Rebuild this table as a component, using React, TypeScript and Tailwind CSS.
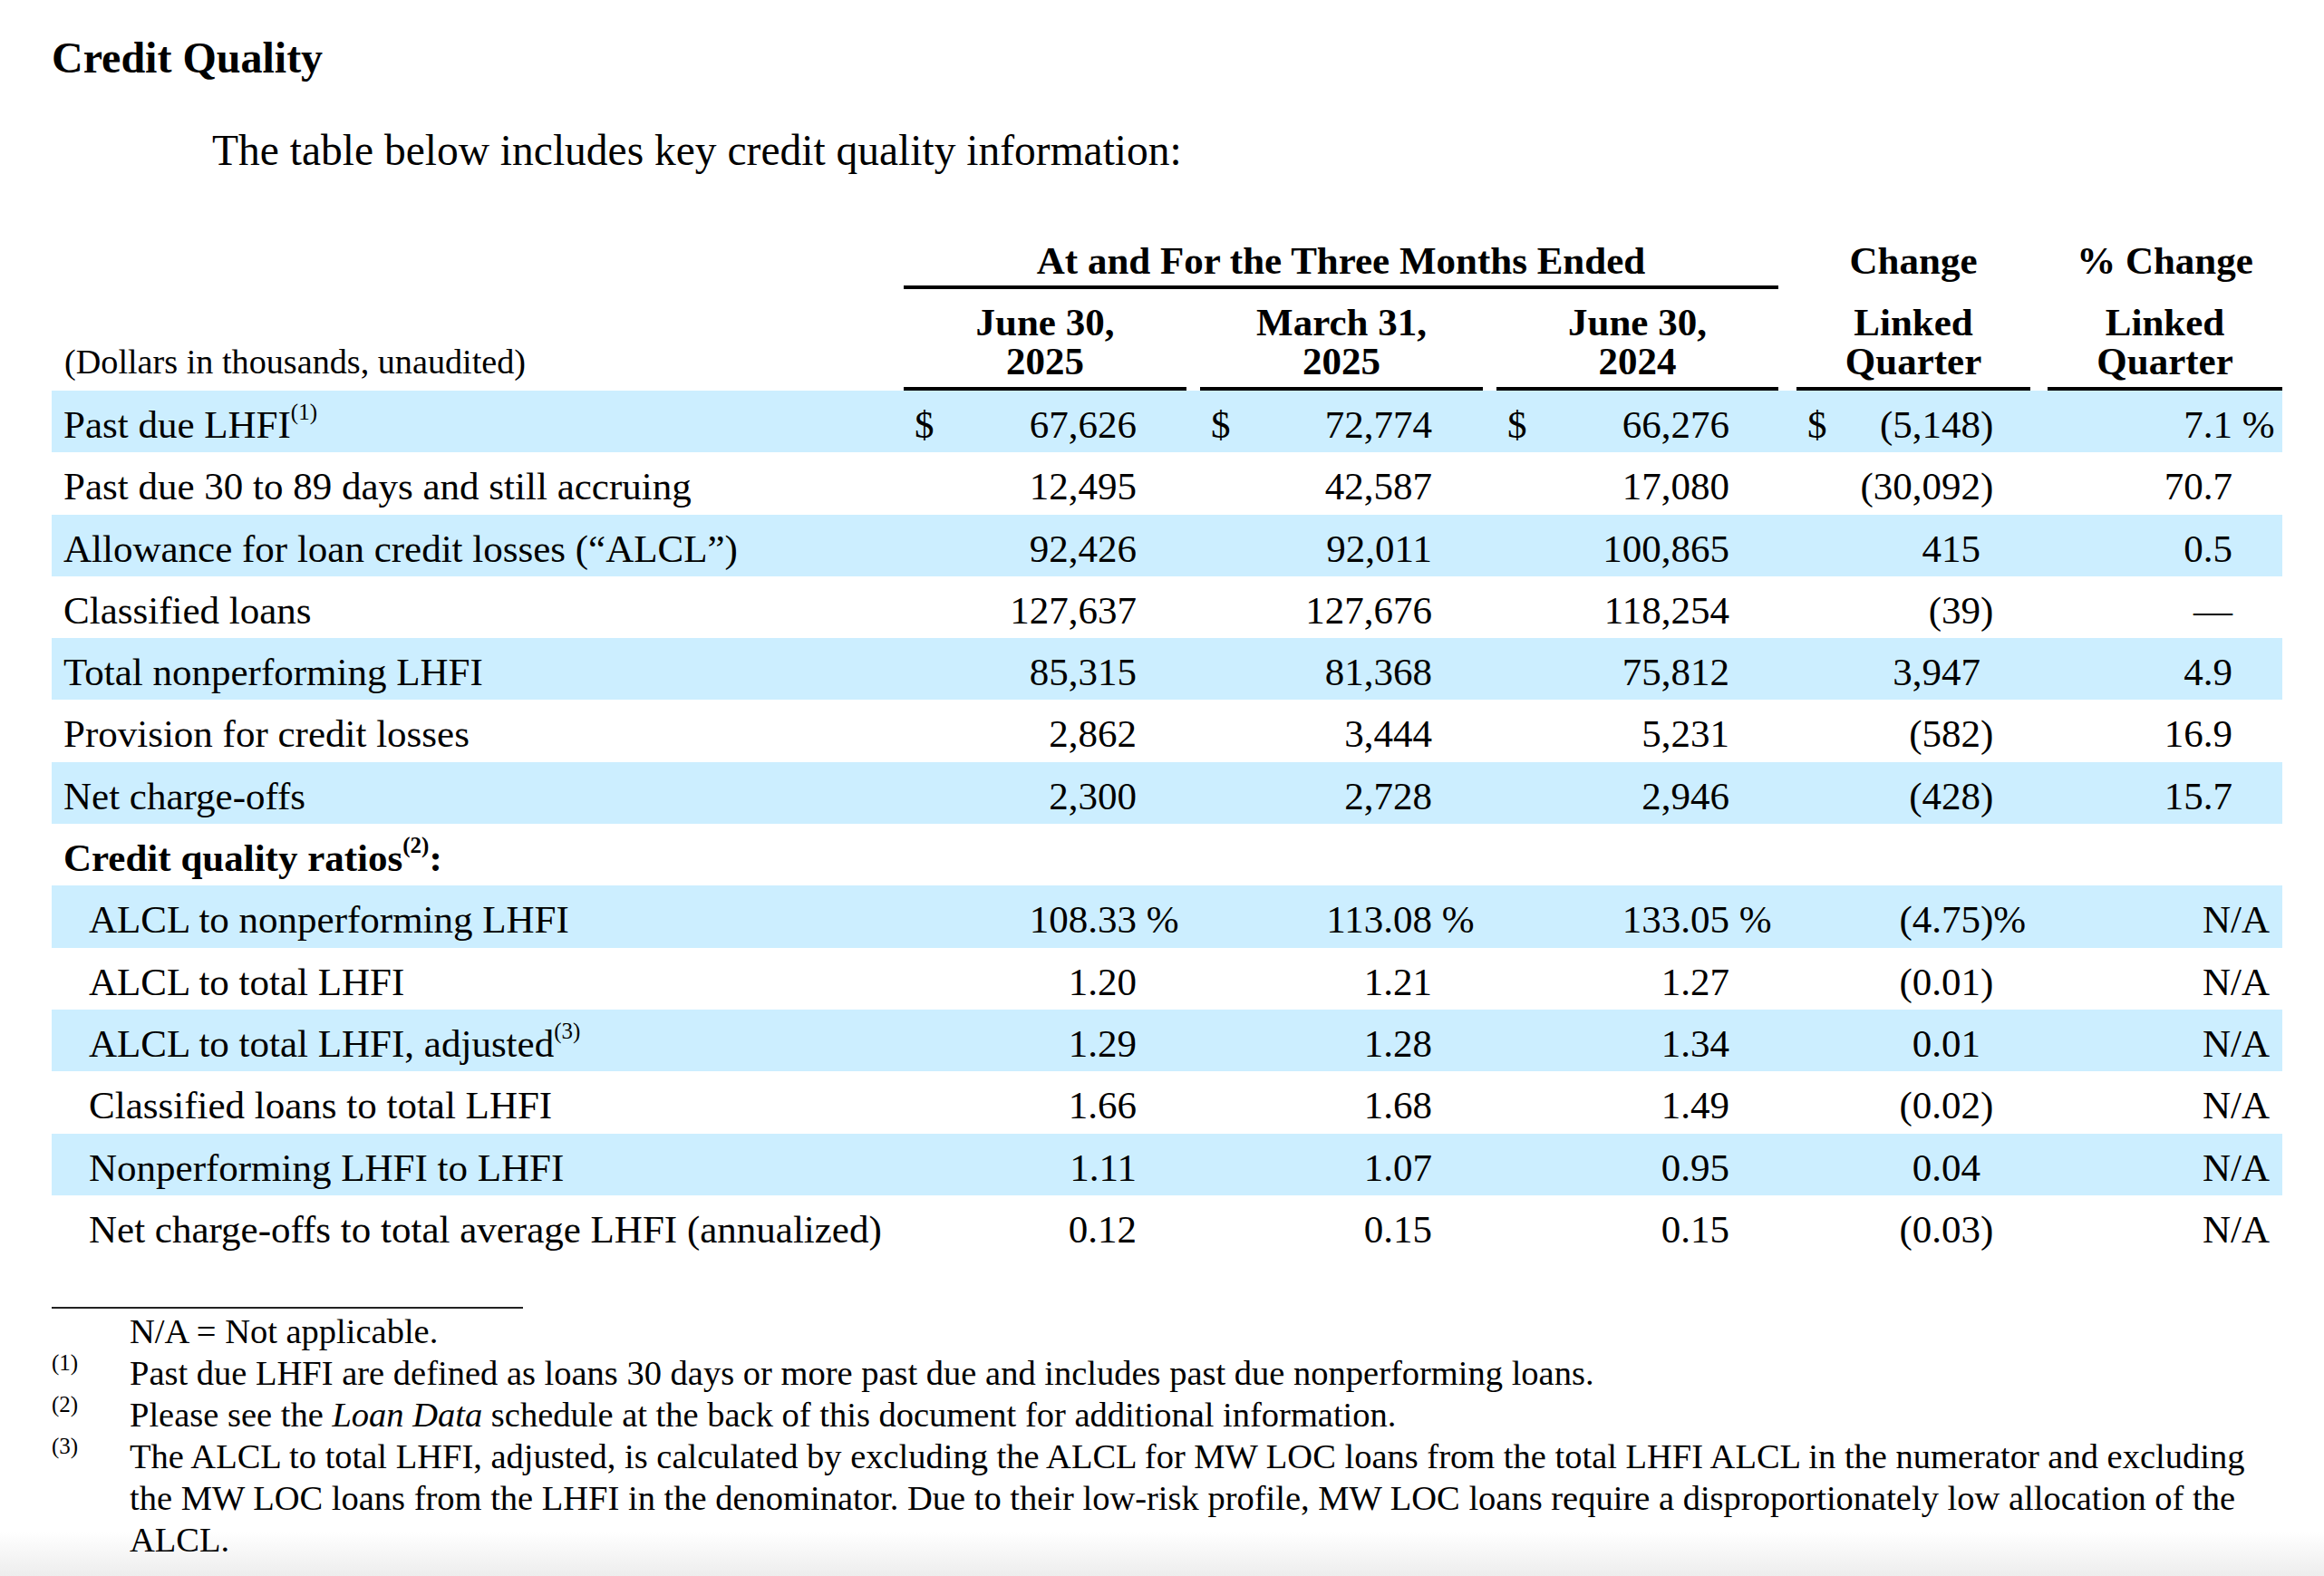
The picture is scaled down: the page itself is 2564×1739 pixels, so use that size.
import React from "react";

type Row = {
  label: React.ReactNode;
  vals?: string[];
  dollar?: boolean;
  blue?: boolean;
  indent?: boolean;
  bold?: boolean;
};

const Sup = ({ children }: { children: React.ReactNode }) => (
  <sup className="text-[25px] top-[-20px]">{children}</sup>
);

const rows: Row[] = [
  { label: <>Past due LHFI<Sup>(1)</Sup></>, vals: ["67,626", "72,774", "66,276", "(5,148)", "7.1 %"], dollar: true, blue: true },
  { label: "Past due 30 to 89 days and still accruing", vals: ["12,495", "42,587", "17,080", "(30,092)", "70.7"] },
  { label: "Allowance for loan credit losses (\u201CALCL\u201D)", vals: ["92,426", "92,011", "100,865", "415", "0.5"], blue: true },
  { label: "Classified loans", vals: ["127,637", "127,676", "118,254", "(39)", "\u2014"] },
  { label: "Total nonperforming LHFI", vals: ["85,315", "81,368", "75,812", "3,947", "4.9"], blue: true },
  { label: "Provision for credit losses", vals: ["2,862", "3,444", "5,231", "(582)", "16.9"] },
  { label: "Net charge-offs", vals: ["2,300", "2,728", "2,946", "(428)", "15.7"], blue: true },
  { label: <>Credit quality ratios<Sup>(2)</Sup>:</>, bold: true },
  { label: "ALCL to nonperforming LHFI", vals: ["108.33 %", "113.08 %", "133.05 %", "(4.75)%", "N/A"], blue: true, indent: true },
  { label: "ALCL to total LHFI", vals: ["1.20", "1.21", "1.27", "(0.01)", "N/A"], indent: true },
  { label: <>ALCL to total LHFI, adjusted<Sup>(3)</Sup></>, vals: ["1.29", "1.28", "1.34", "0.01", "N/A"], blue: true, indent: true },
  { label: "Classified loans to total LHFI", vals: ["1.66", "1.68", "1.49", "(0.02)", "N/A"], indent: true },
  { label: "Nonperforming LHFI to LHFI", vals: ["1.11", "1.07", "0.95", "0.04", "N/A"], blue: true, indent: true },
  { label: "Net charge-offs to total average LHFI (annualized)", vals: ["0.12", "0.15", "0.15", "(0.03)", "N/A"], indent: true },
];

function split(v: string): [string, string] {
  if (v.endsWith(" %")) return [v.slice(0, -2), " %"];
  if (v.endsWith(")%")) return [v.slice(0, -2), ")%"];
  if (v.endsWith(")")) return [v.slice(0, -1), ")"];
  return [v, ""];
}

const widths = ["w-[312px]", "w-[312px]", "w-[311px]", "w-[258px]", "w-[259px]"];
const gaps = ["", "ml-[15px]", "ml-[15px]", "ml-[20px]", "ml-[19px]"];
const pads = ["pr-[55px]", "pr-[56px]", "pr-[54px]", "pr-[55px]", "pr-[55px]"];

function Cell({ v, i, dollar }: { v: string; i: number; dollar?: boolean }) {
  if (v === "N/A") {
    return (
      <div className={`${widths[i]} ${gaps[i]} shrink-0 text-right pr-[14px]`}>N/A</div>
    );
  }
  const [main, suffix] = split(v);
  return (
    <div className={`${widths[i]} ${gaps[i]} ${pads[i]} shrink-0 flex pl-[12px]`}>
      <span>{dollar && i < 4 ? "$" : ""}</span>
      <span className="flex-1 text-right whitespace-nowrap">
        {main}
        <span className="inline-block w-0 whitespace-pre">{suffix}</span>
      </span>
    </div>
  );
}

export default function App() {
  return (
    <div
      className="h-[1739px] overflow-hidden text-black bg-[linear-gradient(to_bottom,#ffffff_1690px,#ededed_1739px)]"
      style={{ fontFamily: '"Liberation Serif", "Times New Roman", serif' }}
    >
      <div className="pl-[57px] pt-[36px]">
        <h1 className="text-[48px] font-bold leading-[56px]">Credit Quality</h1>
        <p className="mt-[46px] pl-[177px] text-[47.5px] leading-[56px]">
          The table below includes key credit quality information:
        </p>

        {/* Header row A */}
        <div className="mt-[70px] flex items-end text-[43px] font-bold leading-[47px]">
          <div className="w-[940px] shrink-0" />
          <div className="w-[965px] shrink-0 text-center pb-[4px] border-b-[4px] border-black">
            At and For the Three Months Ended
          </div>
          <div className="w-[258px] ml-[20px] shrink-0 text-center pb-[8px]">Change</div>
          <div className="w-[259px] ml-[19px] shrink-0 text-center pb-[8px]">% Change</div>
        </div>

        {/* Header row B */}
        <div className="mt-[15px] flex items-end">
          <div className="w-[940px] shrink-0 pl-[14px] pb-[10px] text-[38.2px] leading-[43px]">
            (Dollars in thousands, unaudited)
          </div>
          {[
            ["June 30,", "2025"],
            ["March 31,", "2025"],
            ["June 30,", "2024"],
            ["Linked", "Quarter"],
            ["Linked", "Quarter"],
          ].map((h, i) => (
            <div
              key={i}
              className={`${widths[i]} ${gaps[i]} shrink-0 text-center text-[43px] font-bold leading-[43px] pb-[7px] border-b-[4px] border-black`}
            >
              <div>{h[0]}</div>
              <div>{h[1]}</div>
            </div>
          ))}
        </div>

        {/* Body rows */}
        <div className="w-[2461px] text-[43px]">
          {rows.map((r, idx) => (
            <div
              key={idx}
              className={`flex h-[68.3px] pt-[7px] leading-[61.3px] ${r.blue ? "bg-[#cceeff]" : ""}`}
            >
              <div
                className={`w-[940px] shrink-0 whitespace-nowrap ${r.indent ? "pl-[41px]" : "pl-[13px]"} ${r.bold ? "font-bold" : ""}`}
              >
                {r.label}
              </div>
              {r.vals?.map((v, i) => (
                <Cell key={i} v={v} i={i} dollar={r.dollar} />
              ))}
            </div>
          ))}
        </div>

        {/* Footnotes */}
        <div className="mt-[55px] w-[520px] h-[2px] bg-[#222]" />
        <div className="mt-[2px] w-[2453px] text-[38.5px] leading-[46px]">
          <div className="flex">
            <div className="w-[86px] shrink-0" />
            <div>N/A = Not applicable.</div>
          </div>
          {[
            ["(1)", <>Past due LHFI are defined as loans 30 days or more past due and includes past due nonperforming loans.</>],
            ["(2)", <>Please see the <i>Loan Data</i> schedule at the back of this document for additional information.</>],
            [
              "(3)",
              <>
                The ALCL to total LHFI, adjusted, is calculated by excluding the ALCL for MW LOC loans from the total LHFI ALCL in the numerator and excluding the MW LOC loans from the LHFI in the denominator. Due to their low-risk profile, MW LOC loans require a disproportionately low allocation of the ALCL.
              </>,
            ],
          ].map(([m, t], i) => (
            <div key={i} className="flex">
              <div className="w-[86px] shrink-0 text-[25px] leading-[22px] pt-[1px]">{m}</div>
              <div className="flex-1">{t}</div>
            </div>
          ))}
        </div>
      </div>
    </div>
  );
}
